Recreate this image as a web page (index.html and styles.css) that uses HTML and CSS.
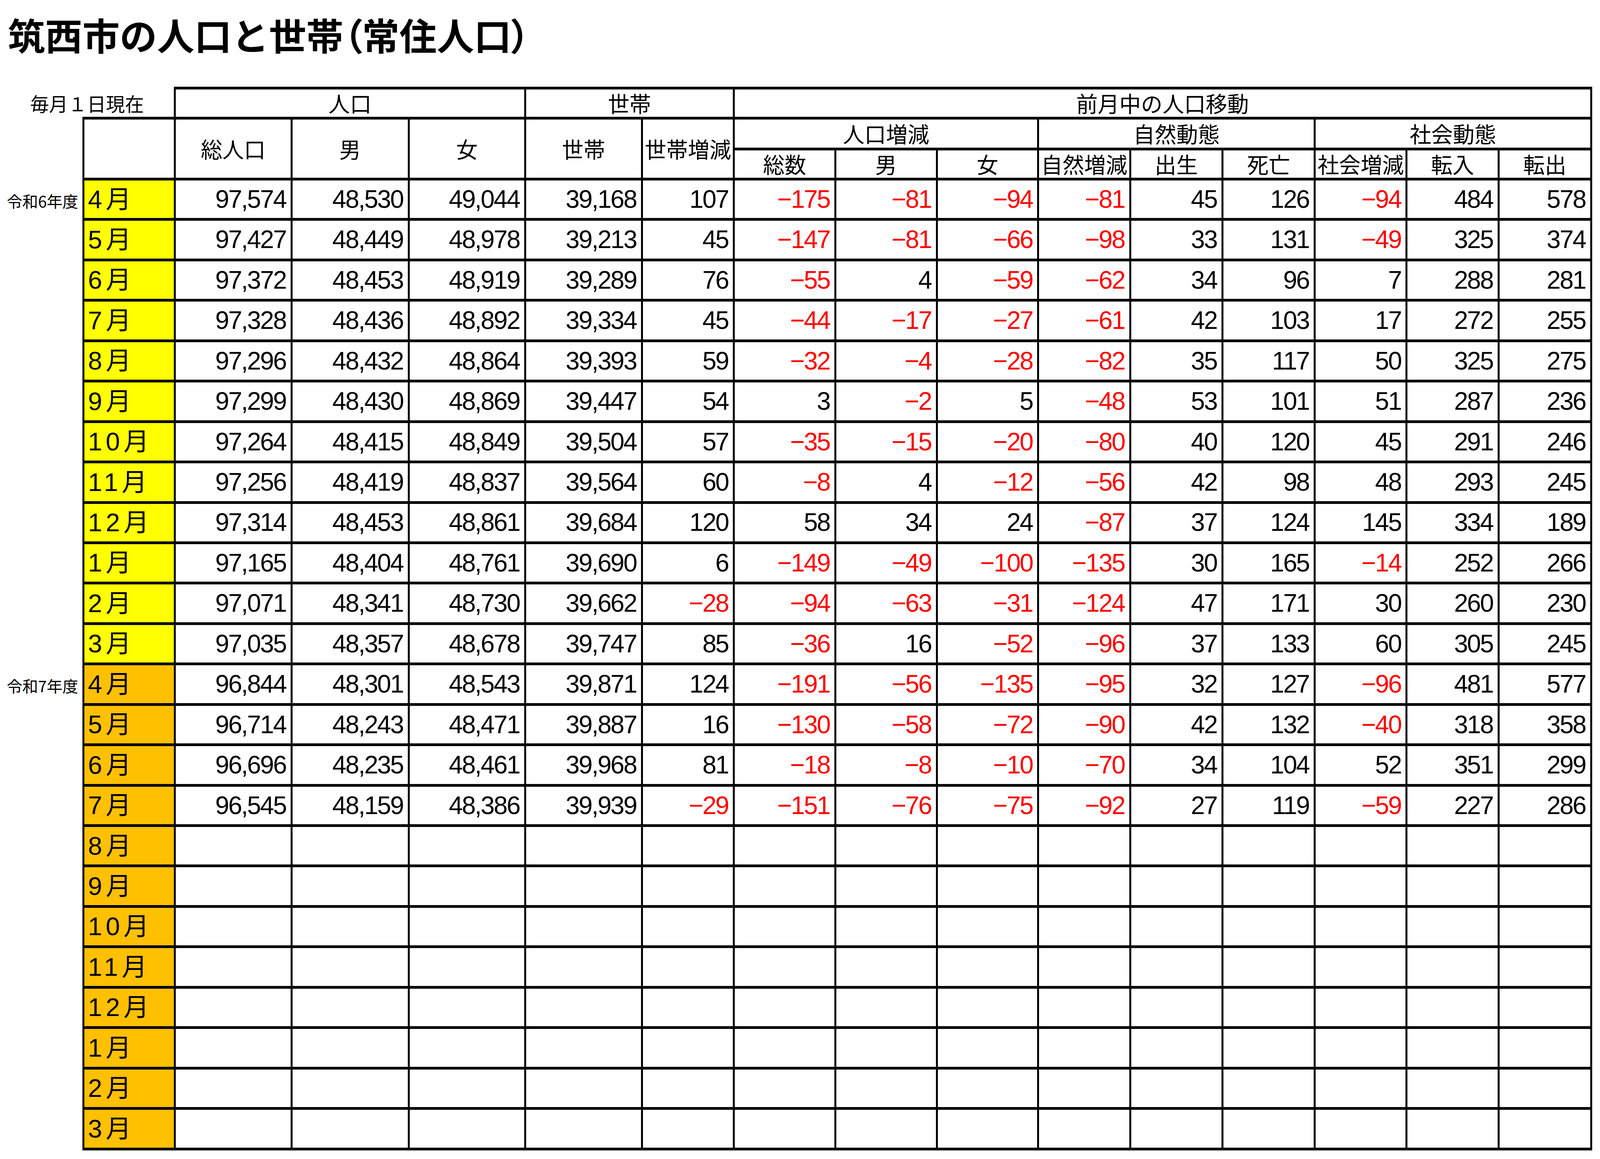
FILE: index.html
```html
<!DOCTYPE html>
<html lang="ja">
<head>
<meta charset="utf-8">
<title>筑西市の人口と世帯（常住人口）</title>
<link rel="stylesheet" href="styles.css">
</head>
<body>
<div class="page">
<h1 class="title">筑西市の人口と世帯<span class="paren">（</span>常住人口<span class="paren">）</span></h1>
<div class="sheet">
  <div class="asof">毎月１日現在</div>
  <div class="corner"></div>
  <div class="hd top s3">人口</div>
  <div class="hd top s2">世帯</div>
  <div class="hd top s9 last">前月中の人口移動</div>

  <div class="yr"></div>
  <div class="mo r2"></div>
  <div class="hd r2">総人口</div>
  <div class="hd r2">男</div>
  <div class="hd r2">女</div>
  <div class="hd r2">世帯</div>
  <div class="hd r2">世帯増減</div>
  <div class="hd s3">人口増減</div>
  <div class="hd s3">自然動態</div>
  <div class="hd s3 last">社会動態</div>

  <div class="yr"></div>
  <div class="hd">総数</div>
  <div class="hd">男</div>
  <div class="hd">女</div>
  <div class="hd">自然増減</div>
  <div class="hd">出生</div>
  <div class="hd">死亡</div>
  <div class="hd">社会増減</div>
  <div class="hd">転入</div>
  <div class="hd last">転出</div>

  <div class="yr">令和6年度</div><div class="mo y6">4月</div><div class="n">97,574</div><div class="n">48,530</div><div class="n">49,044</div><div class="n">39,168</div><div class="n">107</div><div class="n neg">−175</div><div class="n neg">−81</div><div class="n neg">−94</div><div class="n neg">−81</div><div class="n">45</div><div class="n">126</div><div class="n neg">−94</div><div class="n">484</div><div class="n last">578</div>
  <div class="yr"></div><div class="mo y6">5月</div><div class="n">97,427</div><div class="n">48,449</div><div class="n">48,978</div><div class="n">39,213</div><div class="n">45</div><div class="n neg">−147</div><div class="n neg">−81</div><div class="n neg">−66</div><div class="n neg">−98</div><div class="n">33</div><div class="n">131</div><div class="n neg">−49</div><div class="n">325</div><div class="n last">374</div>
  <div class="yr"></div><div class="mo y6">6月</div><div class="n">97,372</div><div class="n">48,453</div><div class="n">48,919</div><div class="n">39,289</div><div class="n">76</div><div class="n neg">−55</div><div class="n">4</div><div class="n neg">−59</div><div class="n neg">−62</div><div class="n">34</div><div class="n">96</div><div class="n">7</div><div class="n">288</div><div class="n last">281</div>
  <div class="yr"></div><div class="mo y6">7月</div><div class="n">97,328</div><div class="n">48,436</div><div class="n">48,892</div><div class="n">39,334</div><div class="n">45</div><div class="n neg">−44</div><div class="n neg">−17</div><div class="n neg">−27</div><div class="n neg">−61</div><div class="n">42</div><div class="n">103</div><div class="n">17</div><div class="n">272</div><div class="n last">255</div>
  <div class="yr"></div><div class="mo y6">8月</div><div class="n">97,296</div><div class="n">48,432</div><div class="n">48,864</div><div class="n">39,393</div><div class="n">59</div><div class="n neg">−32</div><div class="n neg">−4</div><div class="n neg">−28</div><div class="n neg">−82</div><div class="n">35</div><div class="n">117</div><div class="n">50</div><div class="n">325</div><div class="n last">275</div>
  <div class="yr"></div><div class="mo y6">9月</div><div class="n">97,299</div><div class="n">48,430</div><div class="n">48,869</div><div class="n">39,447</div><div class="n">54</div><div class="n">3</div><div class="n neg">−2</div><div class="n">5</div><div class="n neg">−48</div><div class="n">53</div><div class="n">101</div><div class="n">51</div><div class="n">287</div><div class="n last">236</div>
  <div class="yr"></div><div class="mo y6">10月</div><div class="n">97,264</div><div class="n">48,415</div><div class="n">48,849</div><div class="n">39,504</div><div class="n">57</div><div class="n neg">−35</div><div class="n neg">−15</div><div class="n neg">−20</div><div class="n neg">−80</div><div class="n">40</div><div class="n">120</div><div class="n">45</div><div class="n">291</div><div class="n last">246</div>
  <div class="yr"></div><div class="mo y6">11月</div><div class="n">97,256</div><div class="n">48,419</div><div class="n">48,837</div><div class="n">39,564</div><div class="n">60</div><div class="n neg">−8</div><div class="n">4</div><div class="n neg">−12</div><div class="n neg">−56</div><div class="n">42</div><div class="n">98</div><div class="n">48</div><div class="n">293</div><div class="n last">245</div>
  <div class="yr"></div><div class="mo y6">12月</div><div class="n">97,314</div><div class="n">48,453</div><div class="n">48,861</div><div class="n">39,684</div><div class="n">120</div><div class="n">58</div><div class="n">34</div><div class="n">24</div><div class="n neg">−87</div><div class="n">37</div><div class="n">124</div><div class="n">145</div><div class="n">334</div><div class="n last">189</div>
  <div class="yr"></div><div class="mo y6">1月</div><div class="n">97,165</div><div class="n">48,404</div><div class="n">48,761</div><div class="n">39,690</div><div class="n">6</div><div class="n neg">−149</div><div class="n neg">−49</div><div class="n neg">−100</div><div class="n neg">−135</div><div class="n">30</div><div class="n">165</div><div class="n neg">−14</div><div class="n">252</div><div class="n last">266</div>
  <div class="yr"></div><div class="mo y6">2月</div><div class="n">97,071</div><div class="n">48,341</div><div class="n">48,730</div><div class="n">39,662</div><div class="n neg">−28</div><div class="n neg">−94</div><div class="n neg">−63</div><div class="n neg">−31</div><div class="n neg">−124</div><div class="n">47</div><div class="n">171</div><div class="n">30</div><div class="n">260</div><div class="n last">230</div>
  <div class="yr"></div><div class="mo y6">3月</div><div class="n">97,035</div><div class="n">48,357</div><div class="n">48,678</div><div class="n">39,747</div><div class="n">85</div><div class="n neg">−36</div><div class="n">16</div><div class="n neg">−52</div><div class="n neg">−96</div><div class="n">37</div><div class="n">133</div><div class="n">60</div><div class="n">305</div><div class="n last">245</div>

  <div class="yr">令和7年度</div><div class="mo y7">4月</div><div class="n">96,844</div><div class="n">48,301</div><div class="n">48,543</div><div class="n">39,871</div><div class="n">124</div><div class="n neg">−191</div><div class="n neg">−56</div><div class="n neg">−135</div><div class="n neg">−95</div><div class="n">32</div><div class="n">127</div><div class="n neg">−96</div><div class="n">481</div><div class="n last">577</div>
  <div class="yr"></div><div class="mo y7">5月</div><div class="n">96,714</div><div class="n">48,243</div><div class="n">48,471</div><div class="n">39,887</div><div class="n">16</div><div class="n neg">−130</div><div class="n neg">−58</div><div class="n neg">−72</div><div class="n neg">−90</div><div class="n">42</div><div class="n">132</div><div class="n neg">−40</div><div class="n">318</div><div class="n last">358</div>
  <div class="yr"></div><div class="mo y7">6月</div><div class="n">96,696</div><div class="n">48,235</div><div class="n">48,461</div><div class="n">39,968</div><div class="n">81</div><div class="n neg">−18</div><div class="n neg">−8</div><div class="n neg">−10</div><div class="n neg">−70</div><div class="n">34</div><div class="n">104</div><div class="n">52</div><div class="n">351</div><div class="n last">299</div>
  <div class="yr"></div><div class="mo y7">7月</div><div class="n">96,545</div><div class="n">48,159</div><div class="n">48,386</div><div class="n">39,939</div><div class="n neg">−29</div><div class="n neg">−151</div><div class="n neg">−76</div><div class="n neg">−75</div><div class="n neg">−92</div><div class="n">27</div><div class="n">119</div><div class="n neg">−59</div><div class="n">227</div><div class="n last">286</div>
  <div class="yr"></div><div class="mo y7">8月</div><div class="n"></div><div class="n"></div><div class="n"></div><div class="n"></div><div class="n"></div><div class="n"></div><div class="n"></div><div class="n"></div><div class="n"></div><div class="n"></div><div class="n"></div><div class="n"></div><div class="n"></div><div class="n last"></div>
  <div class="yr"></div><div class="mo y7">9月</div><div class="n"></div><div class="n"></div><div class="n"></div><div class="n"></div><div class="n"></div><div class="n"></div><div class="n"></div><div class="n"></div><div class="n"></div><div class="n"></div><div class="n"></div><div class="n"></div><div class="n"></div><div class="n last"></div>
  <div class="yr"></div><div class="mo y7">10月</div><div class="n"></div><div class="n"></div><div class="n"></div><div class="n"></div><div class="n"></div><div class="n"></div><div class="n"></div><div class="n"></div><div class="n"></div><div class="n"></div><div class="n"></div><div class="n"></div><div class="n"></div><div class="n last"></div>
  <div class="yr"></div><div class="mo y7">11月</div><div class="n"></div><div class="n"></div><div class="n"></div><div class="n"></div><div class="n"></div><div class="n"></div><div class="n"></div><div class="n"></div><div class="n"></div><div class="n"></div><div class="n"></div><div class="n"></div><div class="n"></div><div class="n last"></div>
  <div class="yr"></div><div class="mo y7">12月</div><div class="n"></div><div class="n"></div><div class="n"></div><div class="n"></div><div class="n"></div><div class="n"></div><div class="n"></div><div class="n"></div><div class="n"></div><div class="n"></div><div class="n"></div><div class="n"></div><div class="n"></div><div class="n last"></div>
  <div class="yr"></div><div class="mo y7">1月</div><div class="n"></div><div class="n"></div><div class="n"></div><div class="n"></div><div class="n"></div><div class="n"></div><div class="n"></div><div class="n"></div><div class="n"></div><div class="n"></div><div class="n"></div><div class="n"></div><div class="n"></div><div class="n last"></div>
  <div class="yr"></div><div class="mo y7">2月</div><div class="n"></div><div class="n"></div><div class="n"></div><div class="n"></div><div class="n"></div><div class="n"></div><div class="n"></div><div class="n"></div><div class="n"></div><div class="n"></div><div class="n"></div><div class="n"></div><div class="n"></div><div class="n last"></div>
  <div class="yr"></div><div class="mo y7">3月</div><div class="n"></div><div class="n"></div><div class="n"></div><div class="n"></div><div class="n"></div><div class="n"></div><div class="n"></div><div class="n"></div><div class="n"></div><div class="n"></div><div class="n"></div><div class="n"></div><div class="n"></div><div class="n last"></div>
</div>
</div>
</body>
</html>
```

FILE: styles.css
```css
:root {
  --u: calc(100vw / 4890);
  --v: calc(100vh / 2967);
}
* { box-sizing: border-box; }
html, body { margin: 0; padding: 0; background: #ffffff; overflow: hidden; }
body {
  color: #000000;
  font-family: "Noto Sans CJK JP", sans-serif;
}
.page {
  width: 100vw;
  height: 100vh;
  padding-top: calc(31 * var(--v));
  overflow: hidden;
}
.title {
  margin: 0 0 0 calc(24 * var(--u));
  font-size: calc(114 * var(--u));
  line-height: calc(112 * var(--v));
  height: calc(112 * var(--v));
  font-weight: 700;
  font-family: "Noto Sans CJK JP", sans-serif;
  white-space: nowrap;
}
.paren { font-feature-settings: "palt"; }

.sheet {
  margin-top: calc(79 * var(--v));
  display: grid;
  grid-template-columns:
    calc(252 * var(--u)) calc(285 * var(--u)) calc(357 * var(--u)) calc(358 * var(--u))
    calc(356 * var(--u)) calc(357 * var(--u)) calc(281 * var(--u)) calc(310 * var(--u))
    calc(310 * var(--u)) calc(310 * var(--u)) calc(281 * var(--u)) calc(282 * var(--u))
    calc(282 * var(--u)) calc(281 * var(--u)) calc(281 * var(--u)) calc(283 * var(--u));
  grid-template-rows: calc(84 * var(--v)) calc(79 * var(--v)) calc(77 * var(--v)) repeat(24, calc(103.45 * var(--v)));
}
.sheet > div {
  display: flex;
  align-items: center;
  min-width: 0;
  white-space: nowrap;
  line-height: 1;
}
.asof {
  font-size: calc(58 * var(--u));
  padding-left: calc(92 * var(--u));
}
.corner {
  border-right: calc(7 * var(--u)) solid #000;
  border-bottom: calc(7 * var(--v)) solid #000;
}
.hd {
  justify-content: center;
  font-size: calc(66 * var(--u));
  background: #fff;
  border-right: calc(6 * var(--u)) solid #000;
  border-bottom: calc(7 * var(--v)) solid #000;
}
.top { border-top: calc(7 * var(--v)) solid #000; }
.s2 { grid-column: span 2; }
.s3 { grid-column: span 3; }
.s9 { grid-column: span 9; }
.r2 { grid-row: span 2; }

.yr {
  justify-content: flex-end;
  padding-right: calc(13 * var(--u));
  font-size: calc(48 * var(--u));
}
.mo {
  background: #fff;
  border-left: calc(7 * var(--u)) solid #000;
  border-right: calc(7 * var(--u)) solid #000;
  border-bottom: calc(7 * var(--v)) solid #000;
  padding-left: calc(11 * var(--u));
  font-family: "Liberation Sans", "Noto Sans CJK JP", sans-serif;
  font-size: calc(78 * var(--u));
  letter-spacing: calc(11 * var(--u));
}
.y6 { background: #ffff00; }
.y7 { background: #ffc000; }
.n {
  justify-content: flex-end;
  padding-right: calc(14 * var(--u));
  border-right: calc(6 * var(--u)) solid #000;
  border-bottom: calc(7 * var(--v)) solid #000;
  font-family: "Liberation Sans", sans-serif;
  font-size: calc(77 * var(--u));
  letter-spacing: calc(-3.2 * var(--u));
}
.neg { color: #ff0000; }
.sheet > .last { border-right-width: calc(7 * var(--u)); }
```
